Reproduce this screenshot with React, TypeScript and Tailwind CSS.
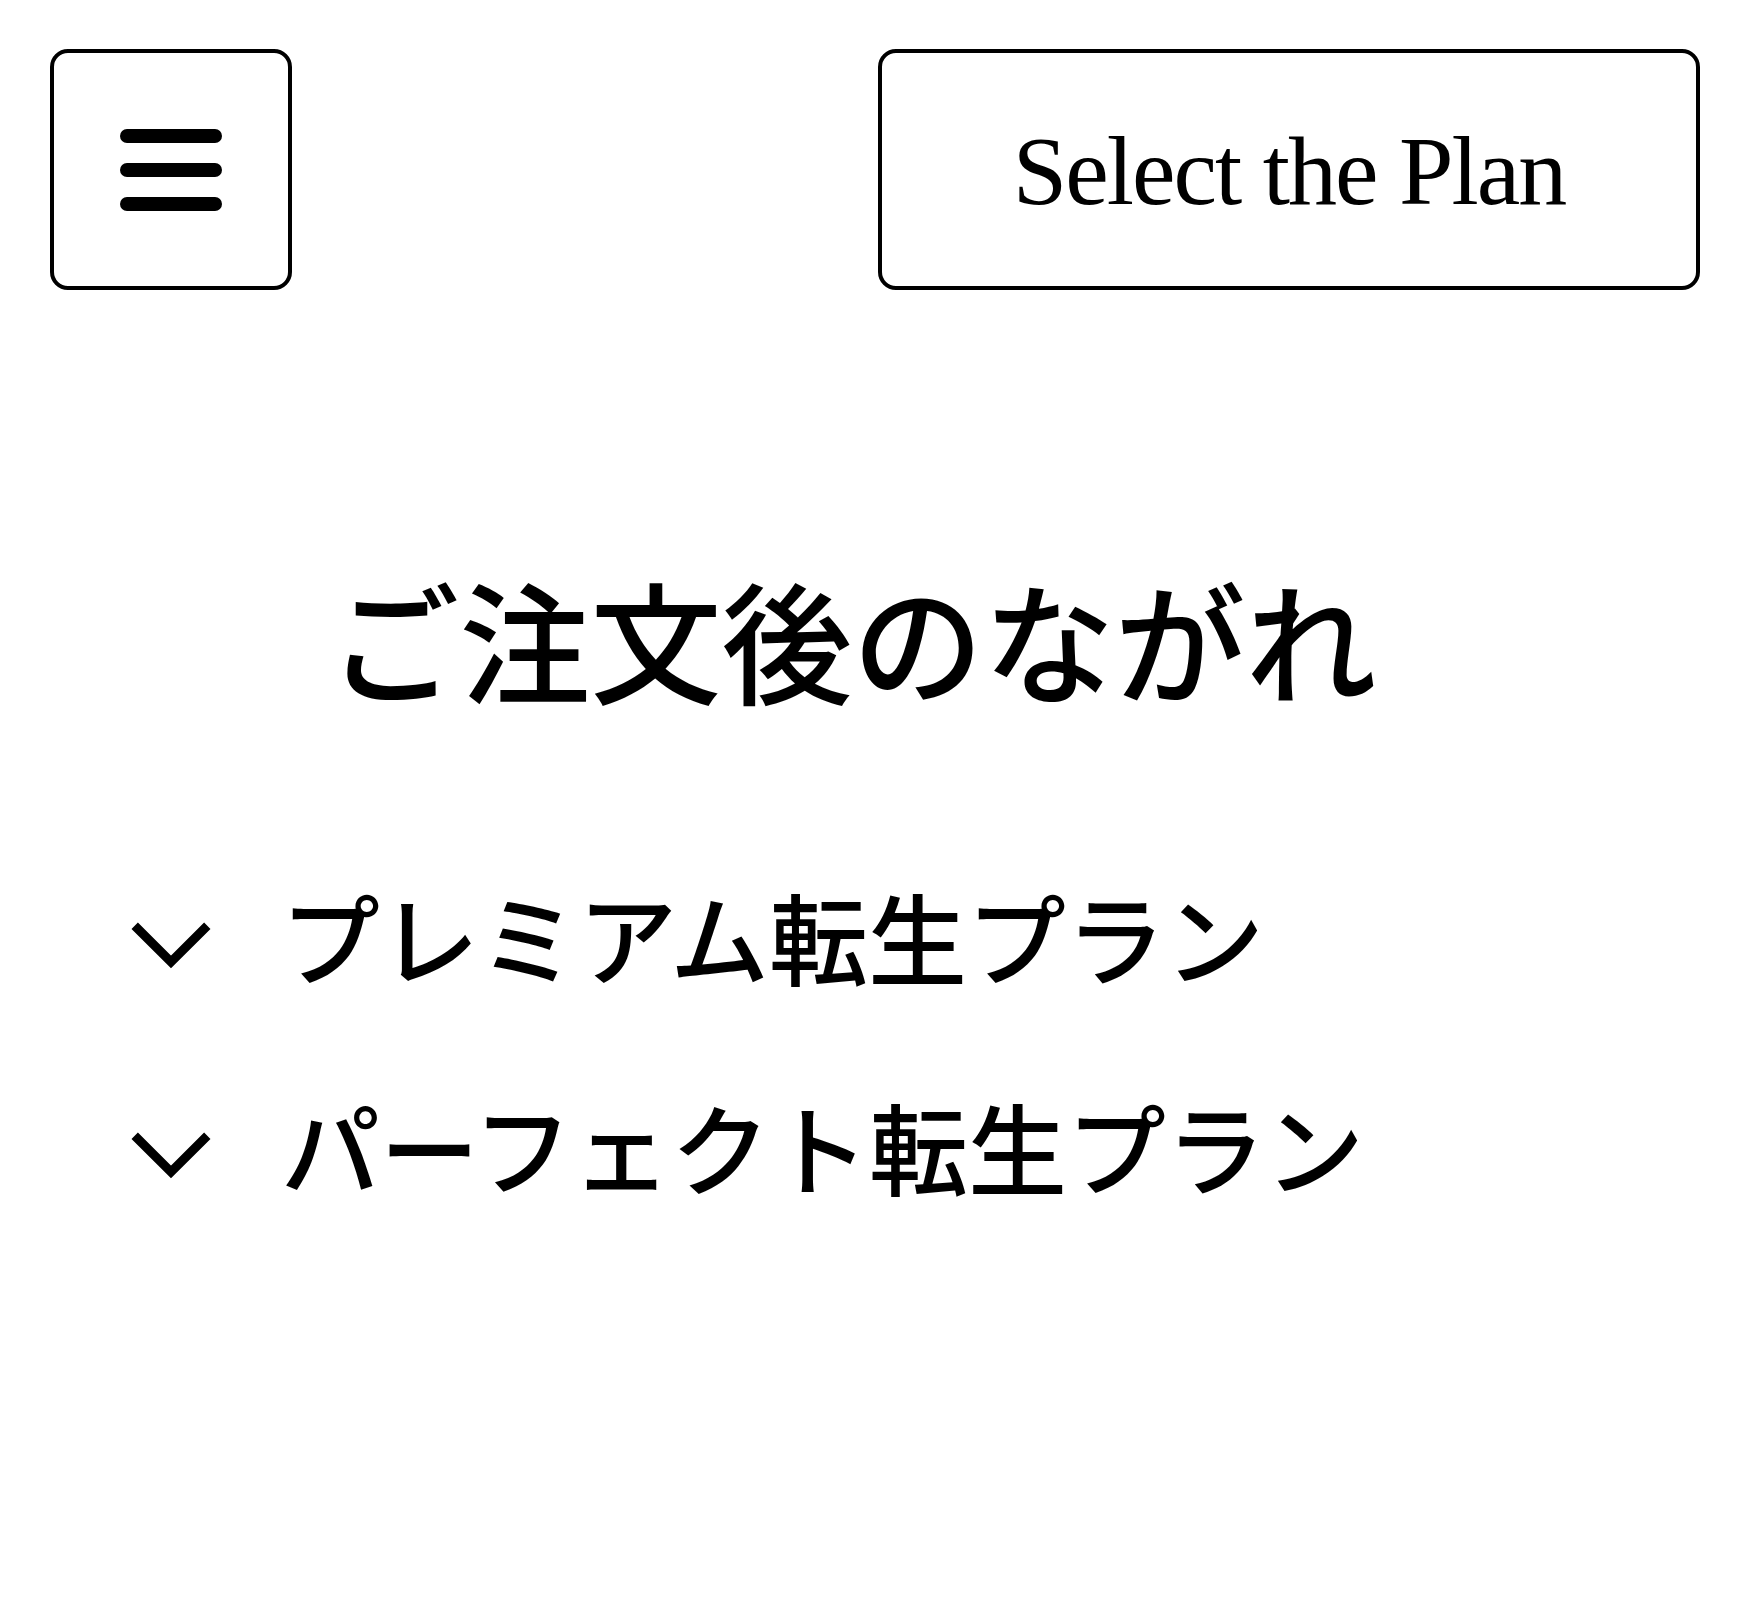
import React from 'react'

const PLANS = ['プレミアム転生プラン', 'パーフェクト転生プラン']

function Chevron() {
  return (
    <svg width="80" height="48" viewBox="0 0 80 48" className="shrink-0">
      <path d="M3.7 4.7 L40 41 L76.3 4.7" fill="none" stroke="#000" strokeWidth="9" strokeLinejoin="miter" />
    </svg>
  )
}

export default function App() {
  return (
    <div className="min-h-[1622px] w-full bg-white text-black" style={{ fontFamily: '"Liberation Serif", "Noto Sans CJK JP", serif' }}>
      {/* header */}
      <header className="flex items-start justify-between pl-[50px] pr-[51px] pt-[49px]">
        <button className="flex h-[241px] w-[242px] flex-col items-center justify-center gap-[20px] rounded-[18px] border-[4px] border-black bg-white">
          <span className="block h-[14px] w-[102px] rounded-full bg-black" />
          <span className="block h-[14px] w-[102px] rounded-full bg-black" />
          <span className="block h-[14px] w-[102px] rounded-full bg-black" />
        </button>
        <button className="flex h-[241px] w-[822px] items-center justify-center rounded-[18px] border-[4px] border-black bg-white pt-[2px]">
          <span className="text-[98px] leading-none tracking-[-2px]">Select the Plan</span>
        </button>
      </header>

      {/* ご注文後のながれ */}
      <section className="pt-[294px]">
        <h2 className="pr-[46px] text-center text-[131px] font-medium leading-none">ご注文後のながれ</h2>

        <ul className="mt-[180px] flex flex-col gap-[111px] pl-[131px]">
          {PLANS.map((p) => (
            <li key={p} className="flex items-center gap-[70px]">
              <Chevron />
              <span className="text-[99px] font-medium leading-none">{p}</span>
            </li>
          ))}
        </ul>
      </section>
    </div>
  )
}
